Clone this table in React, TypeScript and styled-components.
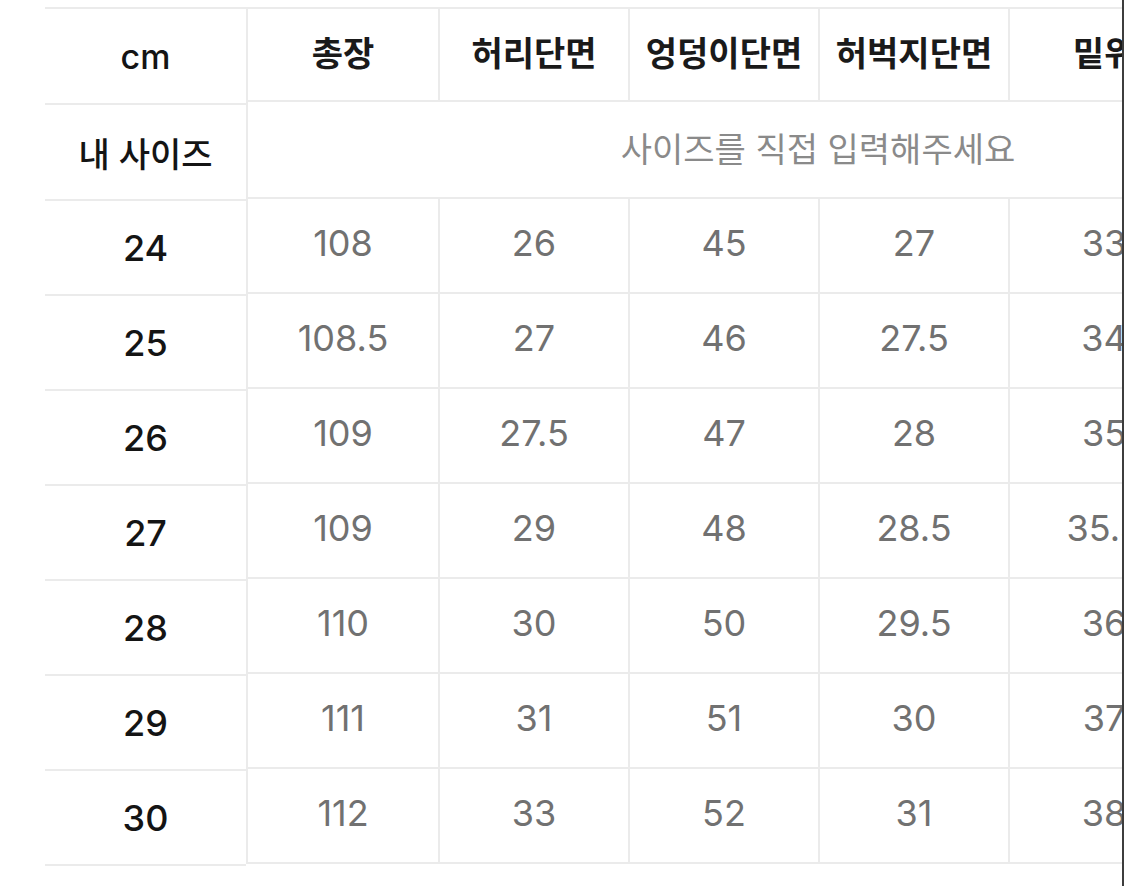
import React from "react";
import styled, { createGlobalStyle } from "styled-components";

const GlobalStyle = createGlobalStyle`
  html, body {
    margin: 0;
    padding: 0;
    background: #ffffff;
  }
  body {
    font-family: Inter, "Noto Sans CJK KR", "Noto Sans", sans-serif;
    -webkit-font-smoothing: antialiased;
  }
`;

const LINE = "#ebebeb";

//column titles, last one sits past the visible edge
const columns = ["총장", "허리단면", "엉덩이단면", "허벅지단면", "밑위", "밑단단면"];

const rows = [
  { size: "24", values: ["108", "26", "45", "27", "33", "19"] },
  { size: "25", values: ["108.5", "27", "46", "27.5", "34", "19.5"] },
  { size: "26", values: ["109", "27.5", "47", "28", "35", "20"] },
  { size: "27", values: ["109", "29", "48", "28.5", "35.5", "20.5"] },
  { size: "28", values: ["110", "30", "50", "29.5", "36", "21"] },
  { size: "29", values: ["111", "31", "51", "30", "37", "21.5"] },
  { size: "30", values: ["112", "33", "52", "31", "38", "22"] },
];

const Frame = styled.div`
  width: 1124px;
  height: 886px;
  box-sizing: border-box;
  padding: 7px 0 0 45px;
  border-right: 2px solid #3d3d3d;
  display: flex;
  overflow: hidden;
`;

const FixedColumn = styled.div`
  width: 201px;
  flex-shrink: 0;
  display: flex;
  flex-direction: column;
  border-top: 2px solid ${LINE};
`;

const LabelCell = styled.div<{ $h: number; $num?: boolean }>`
  height: ${(p) => p.$h}px;
  box-sizing: border-box;
  border-bottom: 2px solid ${LINE};
  display: flex;
  align-items: center;
  justify-content: center;
  font-size: ${(p) => (p.$num ? 36 : 34)}px;
  font-weight: 500;
  color: #141414;
`;

const ScrollArea = styled.div`
  flex: 1;
  overflow: hidden;
`;

const Grid = styled.div`
  width: ${192 + (columns.length - 1) * 190}px;
  display: flex;
  flex-direction: column;
  border-top: 2px solid ${LINE};
`;

const Row = styled.div<{ $h: number }>`
  height: ${(p) => p.$h}px;
  display: flex;
`;

const Cell = styled.div<{ $head?: boolean; $first?: boolean }>`
  width: ${(p) => (p.$first ? 192 : 190)}px;
  flex-shrink: 0;
  box-sizing: border-box;
  border-left: 2px solid ${LINE};
  border-bottom: 2px solid ${LINE};
  padding-bottom: 6px;
  display: flex;
  align-items: center;
  justify-content: center;
  font-size: ${(p) => (p.$head ? 34 : 36)}px;
  font-weight: ${(p) => (p.$head ? 700 : 400)};
  color: ${(p) => (p.$head ? "#1a1a1a" : "#717171")};
  white-space: nowrap;
`;

const InputCell = styled.div`
  flex: 1;
  box-sizing: border-box;
  border-left: 2px solid ${LINE};
  border-bottom: 2px solid ${LINE};
  display: flex;
  align-items: center;
  justify-content: center;
  font-size: 34px;
  color: #8a8a8a;
  padding-bottom: 4px;
`;

const App: React.FC = () => {
  return (
    <>
      <GlobalStyle />
      <Frame>
        <FixedColumn>
          <LabelCell $h={96}>cm</LabelCell>
          <LabelCell $h={96}>내 사이즈</LabelCell>
          {rows.map((r) => (
            <LabelCell key={r.size} $h={95} $num>
              {r.size}
            </LabelCell>
          ))}
        </FixedColumn>

        <ScrollArea>
          <Grid>
            <Row $h={93}>
              {columns.map((c, i) => (
                <Cell key={c} $head $first={i === 0}>
                  {c}
                </Cell>
              ))}
            </Row>
            <Row $h={97}>
              <InputCell>사이즈를 직접 입력해주세요</InputCell>
            </Row>
            {rows.map((r) => (
              <Row key={r.size} $h={95}>
                {r.values.map((v, i) => (
                  <Cell key={i} $first={i === 0}>
                    {v}
                  </Cell>
                ))}
              </Row>
            ))}
          </Grid>
        </ScrollArea>
      </Frame>
    </>
  );
};

export default App;
